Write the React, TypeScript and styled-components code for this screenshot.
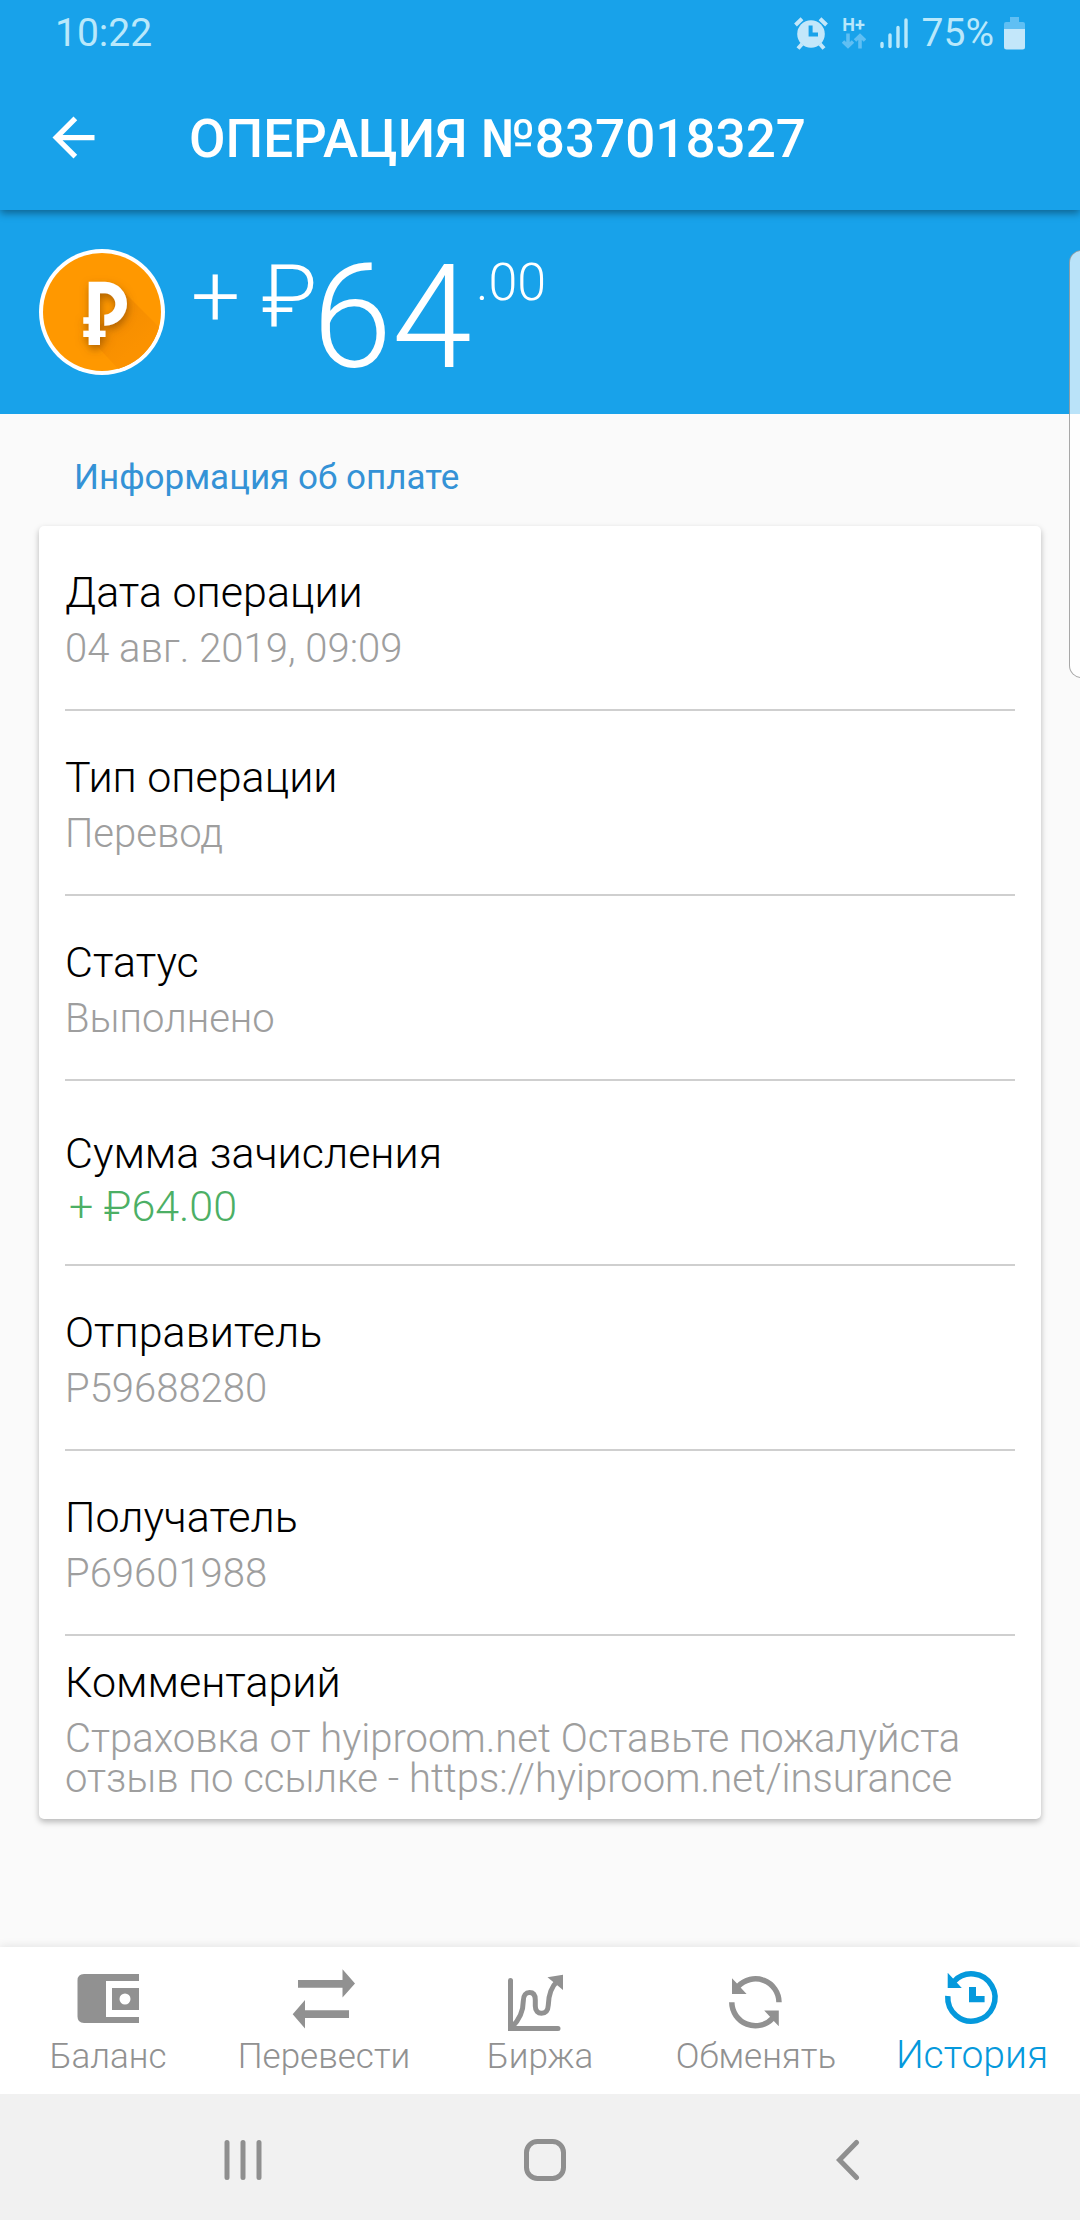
import React from "react";
import styled, { createGlobalStyle, css } from "styled-components";

const color = {
  brand: "#18a2ea",
  active: "#0599dc",
  muted: "#9e9e9e",
  icon: "#919191",
  positive: "#4caf65",
  line: "#cfcfcf",
  page: "#fafafa",
  statusText: "#b9e8fb",
  statusIcon: "#c3e7fa",
  statusDim: "#60bff3",
};

const GlobalStyle = createGlobalStyle`
  * { box-sizing: border-box; }
  body {
    margin: 0;
    background: ${color.page};
    font-family: Roboto, "Noto Sans", sans-serif;
    font-weight: 300;
  }
`;

const Screen = styled.div`
  position: relative;
  min-height: 100vh;
  display: flex;
  flex-direction: column;
  overflow: hidden;
`;

const Header = styled.header`
  position: relative;
  z-index: 1;
  background: ${color.brand};
  box-shadow: 0 3px 8px rgba(0, 0, 0, 0.4);
`;

const StatusBar = styled.div`
  display: flex;
  align-items: center;
  height: 66px;
  padding: 0 55px;
  color: ${color.statusText};
  font-size: 39px;
  font-weight: 400;
  line-height: 66px;
`;

const StatusIcons = styled.div`
  display: flex;
  align-items: center;
  gap: 10px;
  margin-left: auto;
`;

const Charge = styled.span`
  padding-left: 4px;
`;

const Network = styled.div`
  display: flex;
  flex-direction: column;
  align-items: center;
  width: 32px;
  font-size: 18px;
  font-weight: 700;
  line-height: 16px;
`;

const TitleBar = styled.div`
  display: flex;
  align-items: center;
  height: 144px;
`;

const BackButton = styled.button`
  display: flex;
  align-items: center;
  justify-content: center;
  width: 147px;
  height: 144px;
  padding: 0 0 2px;
  border: 0;
  background: none;
  cursor: pointer;
`;

const Title = styled.h1`
  margin: 0;
  padding: 2px 0 0 42px;
  color: #fff;
  font-size: 53px;
  font-weight: 500;
  line-height: 64px;
  white-space: nowrap;
`;

const Hero = styled.section`
  display: flex;
  align-items: flex-start;
  gap: 26px;
  padding: 39px;
  background: ${color.brand};
  color: #fff;
`;

const Amount = styled.div`
  display: flex;
  align-items: flex-start;
  padding-top: 15px;
  white-space: pre;
`;

const Currency = styled.span`
  font-size: 87px;
  line-height: 64px;
`;

const Whole = styled.span`
  margin: 0 4px 0 -5px;
  font-size: 144px;
  line-height: 107px;
`;

const Cents = styled.span`
  font-size: 52px;
  line-height: 38px;
`;

const Main = styled.main`
  padding: 42px 39px;
`;

const SectionTitle = styled.h2`
  margin: 0 0 26px;
  padding-left: 35px;
  color: #3492d6;
  font-size: 35px;
  font-weight: 400;
  line-height: 44px;
`;

const Card = styled.dl`
  margin: 0;
  padding: 0 26px;
  border-radius: 5px;
  background: #fff;
  box-shadow: 0 3px 6px rgba(0, 0, 0, 0.27);
`;

const Row = styled.div<{ $amount?: boolean }>`
  display: flex;
  flex-direction: column;
  justify-content: center;
  gap: ${(p) => (p.$amount ? 8 : 12)}px;
  min-height: 185px;
  padding-top: ${(p) => (p.$amount ? 8 : 0)}px;
  border-bottom: 2px solid ${color.line};

  &:last-child {
    min-height: 183px;
    border-bottom: 0;
  }
`;

const Term = styled.dt`
  color: #000;
  font-size: 43px;
  line-height: 50px;
`;

const Value = styled.dd<{ $amount?: boolean }>`
  margin: 0;
  color: ${color.muted};
  font-size: 40px;
  line-height: 40px;
  ${(p) =>
    p.$amount &&
    css`
      padding-left: 4px;
      color: ${color.positive};
      font-size: 43px;
    `}
`;

const TabBar = styled.nav`
  display: grid;
  grid-template-columns: repeat(5, 1fr);
  height: 147px;
  margin-top: auto;
  background: #fff;
  box-shadow: 0 -2px 8px rgba(0, 0, 0, 0.08);
`;

const Tab = styled.a<{ $active?: boolean }>`
  display: flex;
  flex-direction: column;
  align-items: center;
  gap: 4px;
  padding-top: 21px;
  color: ${(p) => (p.$active ? color.active : color.icon)};
  font-size: ${(p) => (p.$active ? 39 : 35)}px;
  line-height: ${(p) => (p.$active ? 38 : 42)}px;
  text-decoration: none;
  white-space: nowrap;
`;

const SystemBar = styled.div`
  display: grid;
  grid-template-columns: repeat(3, 1fr);
  height: 126px;
  padding: 6px 82px 0 92px;
  background: #f1f1f1;
`;

const SystemButton = styled.button`
  display: flex;
  align-items: center;
  justify-content: center;
  padding: 0;
  border: 0;
  background: none;
  cursor: pointer;
`;

const EdgeHandle = styled.div`
  position: absolute;
  z-index: 2;
  top: 250px;
  right: -14px;
  width: 25px;
  height: 428px;
  border: 1px solid rgba(110, 110, 110, 0.6);
  border-radius: 14px;
  background: rgba(255, 255, 255, 0.7);
`;

const AlarmIcon = () => (
  <svg width="34" height="34" viewBox="0 0 34 34">
    <circle cx="17" cy="18" r="13.8" fill={color.statusIcon} />
    <g fill="none" stroke={color.statusIcon} strokeWidth="4">
      <path d="M1.5 9 8 2.8M26 2.8 32.5 9" />
      <path d="M8 28 4 32.5M26 28l4 4.5" />
    </g>
    <path d="M16.6 9.5V18.6H24" fill="none" stroke={color.brand} strokeWidth="4" />
  </svg>
);

const DataArrows = () => (
  <svg width="24" height="16" viewBox="0 0 24 16" fill="none" stroke={color.statusDim} strokeWidth="3.6">
    <path d="M6 0.5V13M1 8.5 6 13.2 11 8.5" />
    <path d="M18 15.5V3M13 7.5 18 2.8 23 7.5" />
  </svg>
);

const SignalIcon = () => (
  <svg width="28" height="32" viewBox="0 0 28 32" stroke={color.statusText} strokeWidth="3.4" strokeLinecap="round">
    <path d="M2 26.5V29.5M10 18V29.5M18 10.5V29.5M26 3V29.5" />
  </svg>
);

const BatteryIcon = () => (
  <svg width="21" height="34" viewBox="0 0 21 34">
    <path d="M6 1h9v5h4q2 0 2 2v6H0V8q0-2 2-2h4z" fill={color.statusDim} />
    <path d="M0 13h21v18q0 2.5-2.5 2.5h-16Q0 33.5 0 31z" fill={color.statusIcon} />
  </svg>
);

const ArrowIcon = () => (
  <svg width="63" height="63" viewBox="0 0 24 24" fill="#fff">
    <path d="M20 11H7.83l5.59-5.59L12 4l-8 8 8 8 1.41-1.41L7.83 13H20v-2z" />
  </svg>
);

const CoinIcon = () => (
  <svg width="126" height="126" viewBox="0 0 126 126" role="img" aria-label="RUB">
    <defs>
      <linearGradient id="coinShade" x1="55" y1="50" x2="98" y2="98" gradientUnits="userSpaceOnUse">
        <stop offset="0" stopColor="#f08a00" />
        <stop offset="1" stopColor="#fb9200" />
      </linearGradient>
      <clipPath id="coinClip">
        <circle cx="63" cy="63" r="59" />
      </clipPath>
      <filter id="coinShadow" x="-40%" y="-40%" width="180%" height="180%">
        <feDropShadow dx="1" dy="4" stdDeviation="4" floodColor="#7a4300" floodOpacity="0.6" />
      </filter>
    </defs>
    <circle cx="63" cy="63" r="63" fill="#fff" />
    <circle cx="63" cy="63" r="59" fill="#ff9800" />
    <path clipPath="url(#coinClip)" d="M82 40 130 88V140H98L55 94V80L70 70z" fill="url(#coinShade)" />
    <g fill="#fff" filter="url(#coinShadow)">
      <path d="M49.7 32.7H66a22 22 0 0 1 0 44H65.3V65.7A10.7 10.7 0 0 0 66 44.3H61V81.7h5.5V88H61v8H49.7V88h-5.4v-6.3h5.4v-7h-5.4v-6.4h5.4z" />
    </g>
  </svg>
);

const TabSvg = ({ children }: { children: React.ReactNode }) => (
  <svg width="64" height="64" viewBox="0 0 64 64" fill="currentColor" aria-hidden="true">
    {children}
  </svg>
);

const WalletIcon = () => (
  <TabSvg>
    <path d="M8 6H63v7H30V49H63v6H8q-6.500 0-6.500-6.500v-36Q1.500 6 8 6z" />
    <path fillRule="evenodd" d="M36 20H63V42H36zM49 25.5a5.5 5.5 0 1 0 0 11 5.5 5.5 0 0 0 0-11z" />
  </TabSvg>
);

const TransferIcon = () => (
  <TabSvg>
    <path d="M6 12H50.5V1.3L63 15.4 50.5 29.5V19.7H6z" />
    <path d="M57 50H13V60.5L0.7 46.3 13 32V42.3H57z" />
  </TabSvg>
);

const ChartIcon = () => (
  <TabSvg>
    <g fill="none" stroke="currentColor" strokeWidth="5">
      <path d="M2.5 12.5V60.5H50" strokeLinecap="round" />
      <path d="M4 59C10 53 15.3 44 15.3 33C15.3 27 18 24.6 21.5 24.6S27.3 27 27.3 32V38C27.3 43 30 45.3 33.5 45.3S40 43 40.3 37C40.6 26 43 19 49.5 13" />
    </g>
    <path d="M0 58H5V63H0zM39.5 9.3 55 6.7V22z" />
  </TabSvg>
);

const ExchangeIcon = () => (
  <TabSvg>
    <g fill="none" stroke="currentColor" strokeWidth="5.5">
      <path d="M55 34.3A23.6 23.6 0 0 0 14 18.5" />
      <path d="M7.8 34.3A23.6 23.6 0 0 0 48.8 50.1" />
    </g>
    <path d="M8 10.3 13 15.5 17.5 20.5 22.6 26H8zM54.8 58.3 49.8 53.1 45.3 48.1 40.2 42.6H54.8z" />
  </TabSvg>
);

const HistoryIcon = () => (
  <TabSvg>
    <path
      d="M7.8 28A23.6 23.6 0 1 0 14 13.5"
      fill="none"
      stroke="currentColor"
      strokeWidth="5.5"
    />
    <path d="M7.7 4.7 21.8 20H7.7zM29 19h7v9h8.6v6.3H29z" />
  </TabSvg>
);

const RecentsIcon = () => (
  <svg width="42" height="42" viewBox="0 0 42 42" stroke="#8f8f8f" strokeWidth="5" strokeLinecap="round">
    <path d="M5 3.5V38.5M21 3.5V38.5M37 3.5V38.5" />
  </svg>
);

const HomeIcon = () => (
  <svg width="42" height="42" viewBox="0 0 42 42" fill="none" stroke="#8f8f8f" strokeWidth="5">
    <rect x="2.5" y="2.5" width="37" height="37" rx="11" />
  </svg>
);

const SystemBackIcon = () => (
  <svg
    width="42"
    height="42"
    viewBox="0 0 42 42"
    fill="none"
    stroke="#8f8f8f"
    strokeWidth="5"
    strokeLinecap="round"
  >
    <path d="M30.5 3.5 13.5 21 30.5 38.5" />
  </svg>
);

const details = [
  { term: "Дата операции", value: "04 авг. 2019, 09:09" },
  { term: "Тип операции", value: "Перевод" },
  { term: "Статус", value: "Выполнено" },
  { term: "Сумма зачисления", value: "+ ₽64.00", amount: true },
  { term: "Отправитель", value: "P59688280" },
  { term: "Получатель", value: "P69601988" },
  {
    term: "Комментарий",
    value:
      "Страховка от hyiproom.net Оставьте пожалуйста отзыв по ссылке - https://hyiproom.net/insurance",
  },
];

const tabs = [
  { label: "Баланс", Icon: WalletIcon },
  { label: "Перевести", Icon: TransferIcon },
  { label: "Биржа", Icon: ChartIcon },
  { label: "Обменять", Icon: ExchangeIcon },
  { label: "История", Icon: HistoryIcon, active: true },
];

export default function App() {
  return (
    <Screen>
      <GlobalStyle />
      <Header>
        <StatusBar>
          <span>10:22</span>
          <StatusIcons>
            <AlarmIcon />
            <Network>
              <span>H+</span>
              <DataArrows />
            </Network>
            <SignalIcon />
            <Charge>75%</Charge>
            <BatteryIcon />
          </StatusIcons>
        </StatusBar>
        <TitleBar>
          <BackButton type="button" aria-label="Назад">
            <ArrowIcon />
          </BackButton>
          <Title>ОПЕРАЦИЯ №837018327</Title>
        </TitleBar>
      </Header>
      <Hero>
        <CoinIcon />
        <Amount>
          <Currency>+ ₽</Currency>
          <Whole>64</Whole>
          <Cents>.00</Cents>
        </Amount>
      </Hero>
      <Main>
        <SectionTitle>Информация об оплате</SectionTitle>
        <Card>
          {details.map((d) => (
            <Row key={d.term} $amount={d.amount}>
              <Term>{d.term}</Term>
              <Value $amount={d.amount}>{d.value}</Value>
            </Row>
          ))}
        </Card>
      </Main>
      <TabBar>
        {tabs.map(({ label, Icon, active }) => (
          <Tab key={label} href="#" $active={active} aria-current={active ? "page" : undefined}>
            <Icon />
            {label}
          </Tab>
        ))}
      </TabBar>
      <SystemBar>
        <SystemButton type="button" aria-label="Недавние">
          <RecentsIcon />
        </SystemButton>
        <SystemButton type="button" aria-label="Домой">
          <HomeIcon />
        </SystemButton>
        <SystemButton type="button" aria-label="Назад">
          <SystemBackIcon />
        </SystemButton>
      </SystemBar>
      <EdgeHandle />
    </Screen>
  );
}
